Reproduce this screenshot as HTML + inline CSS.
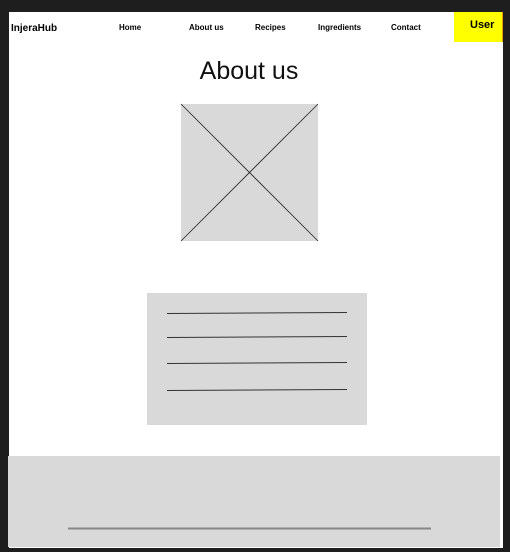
<!DOCTYPE html>
<html><head><style>
body{margin:0;width:510px;height:552px;background:#1e1e1e;position:relative;overflow:hidden;font-family:"Liberation Sans",Arial,sans-serif}
.page{position:absolute;left:9px;top:12px;width:494px;height:536px;background:#fff}
.t{position:absolute;font-weight:bold;font-size:8px;color:#000;white-space:nowrap}
</style></head><body>
<div class="page"></div>
<div class="t" style="left:11px;top:23px;font-size:10px">InjeraHub</div>
<div class="t" style="left:119px;top:23px">Home</div>
<div class="t" style="left:189px;top:23px">About us</div>
<div class="t" style="left:255px;top:23px">Recipes</div>
<div class="t" style="left:318px;top:23px">Ingredients</div>
<div class="t" style="left:391px;top:23px">Contact</div>
<div style="position:absolute;left:454px;top:12px;width:48px;height:30px;background:#ffff00;border-right:1px solid #e8a000"></div>
<div class="t" style="left:470px;top:19px;font-size:11px">User</div>
<div style="position:absolute;left:0;width:498px;top:57px;text-align:center;font-size:25px;color:#111">About us</div>
<svg style="position:absolute;left:0;top:0" width="510" height="552">
<rect x="181" y="104" width="137" height="137" fill="#d9d9d9"/>
<line x1="181" y1="104" x2="318" y2="241" stroke="#222" stroke-width="0.8"/>
<line x1="318" y1="104" x2="181" y2="241" stroke="#222" stroke-width="0.8"/>
<rect x="147" y="293" width="220" height="132" fill="#d9d9d9"/>
<g stroke="#333" stroke-width="1">
<line x1="167" y1="313.5" x2="347" y2="312.5"/>
<line x1="167" y1="337.5" x2="347" y2="336.5"/>
<line x1="167" y1="363.5" x2="347" y2="362.5"/>
<line x1="167" y1="390.5" x2="347" y2="389.5"/>
</g>
<rect x="8" y="456" width="492" height="91" fill="#d9d9d9"/>
<line x1="68" y1="528.5" x2="431" y2="528.5" stroke="#888" stroke-width="2"/>
</svg>
</body></html>
